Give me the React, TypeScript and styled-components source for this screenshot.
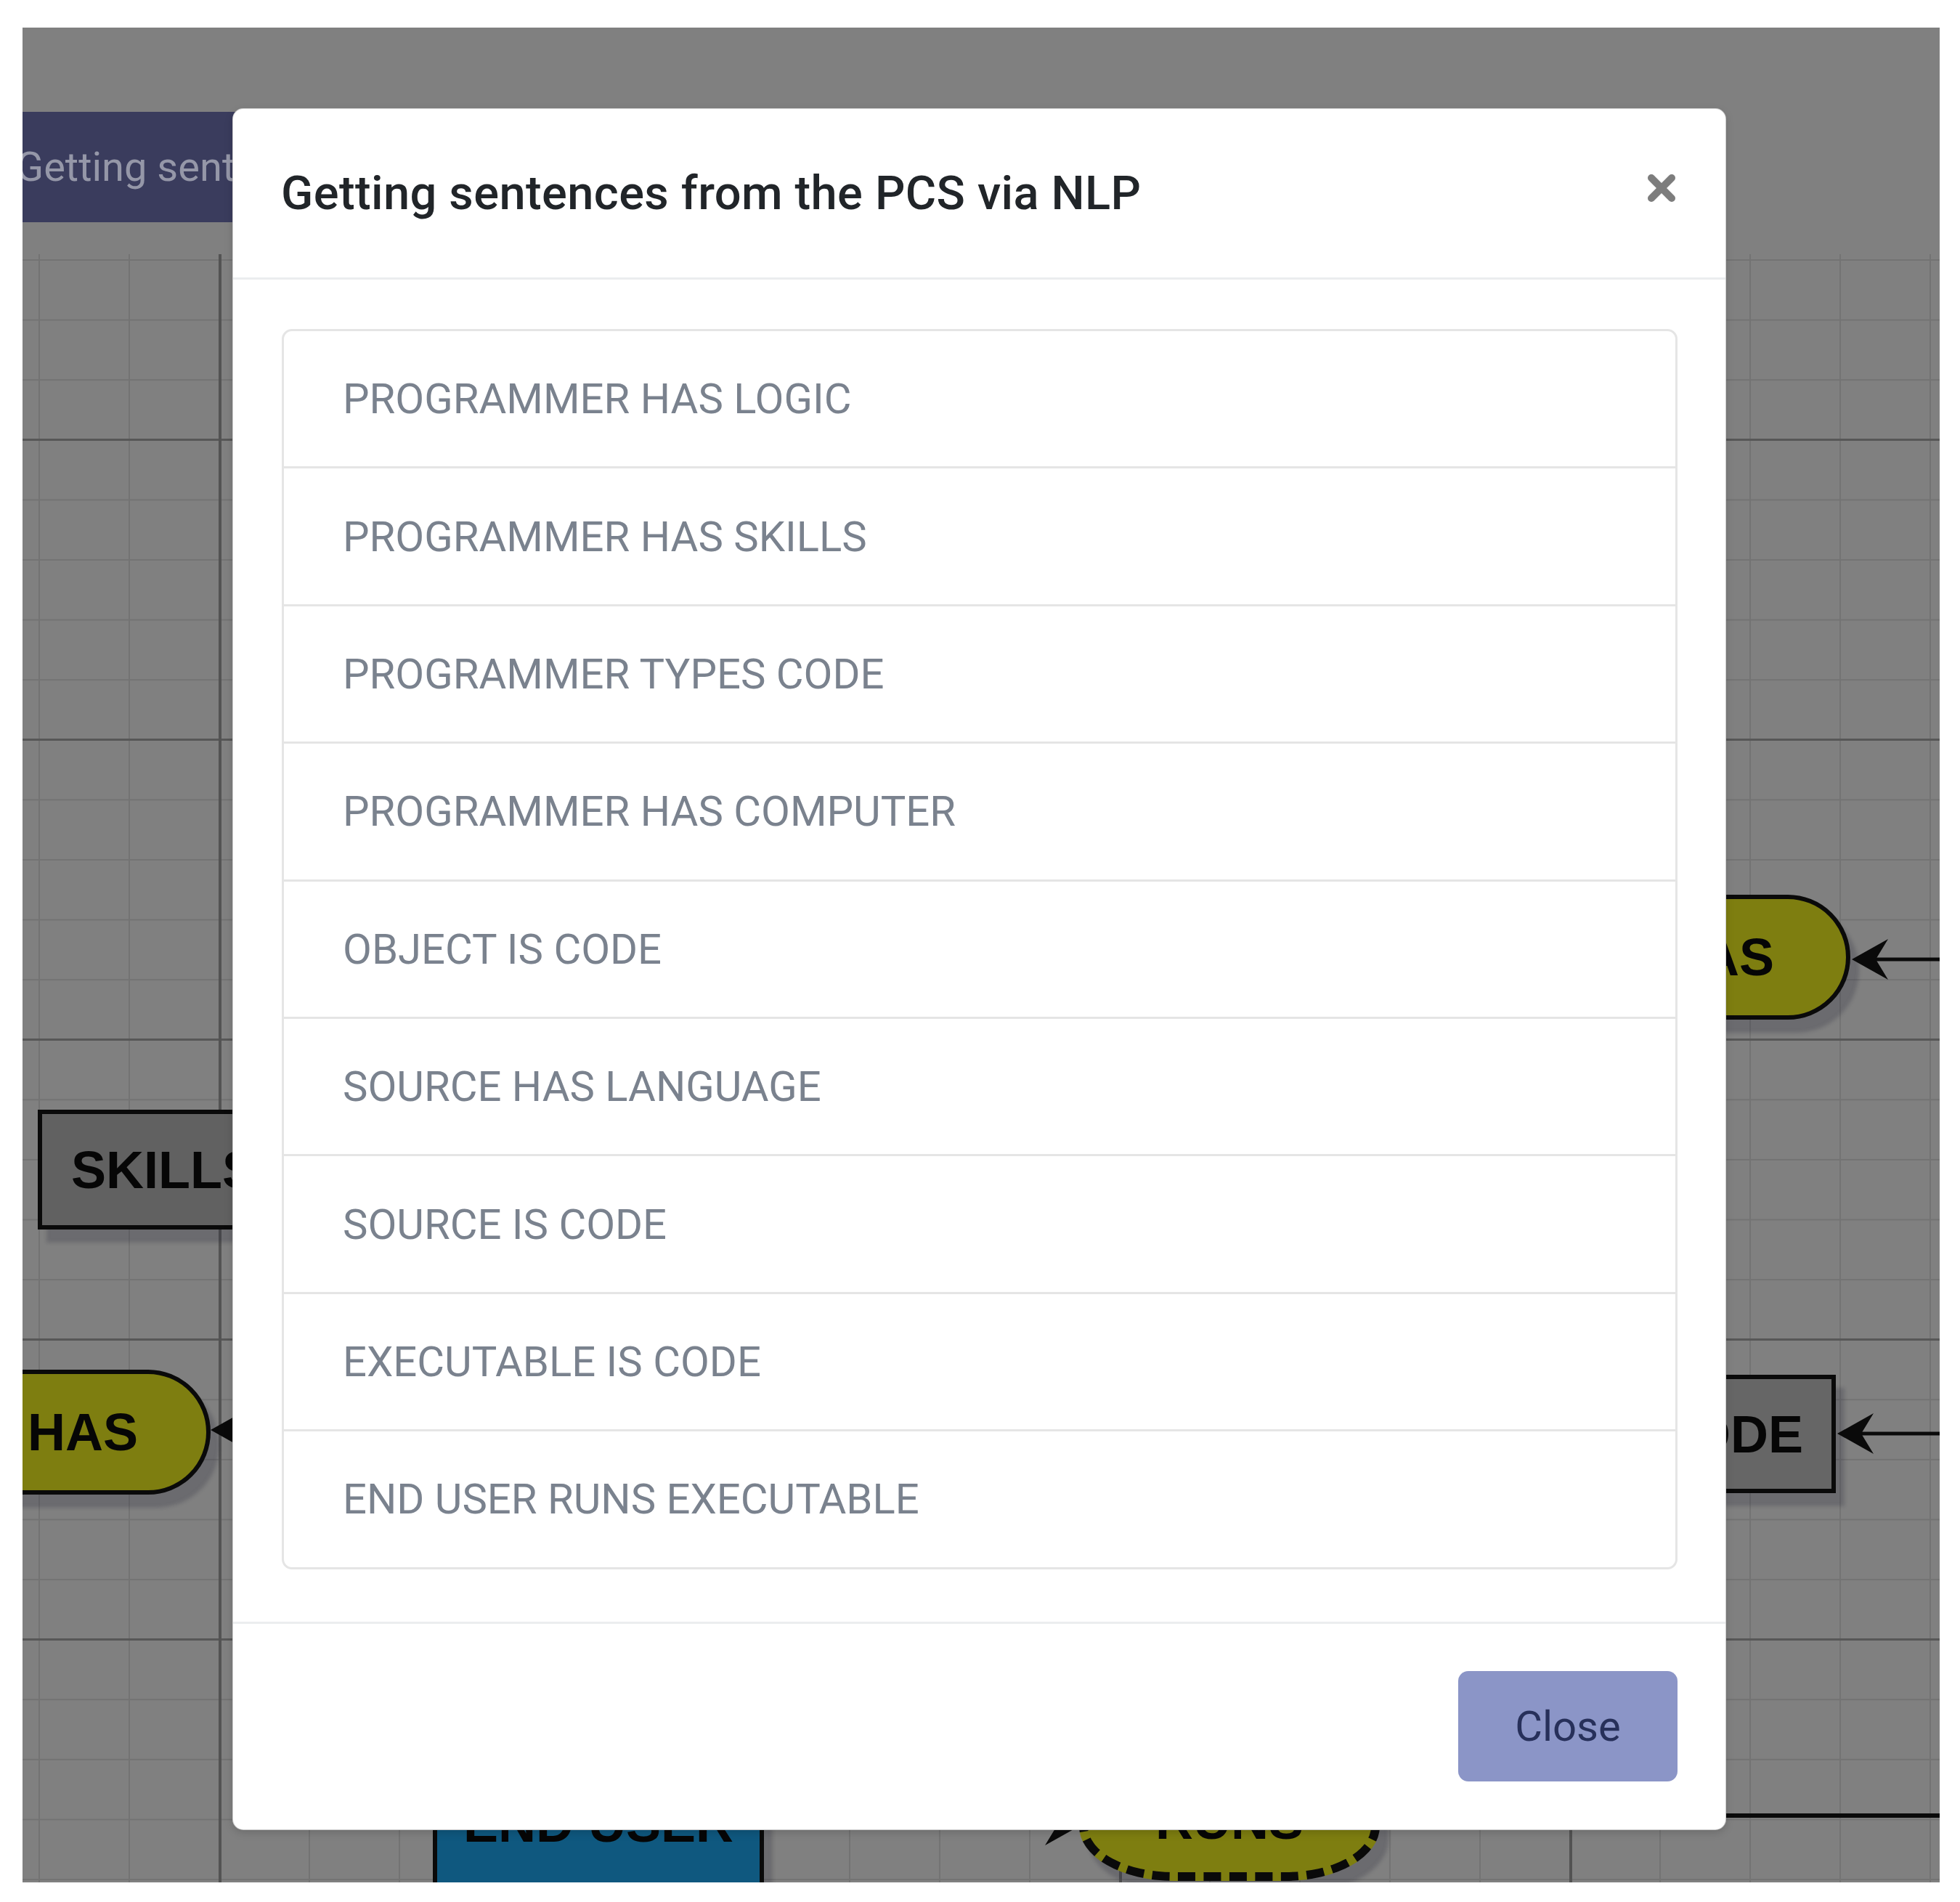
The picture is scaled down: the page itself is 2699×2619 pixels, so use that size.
import React from 'react'
import styled, { createGlobalStyle } from 'styled-components'

const GlobalStyle = createGlobalStyle`
  html, body {
    margin: 0;
    padding: 0;
    background: #ffffff;
  }
  body {
    width: 2699px;
    height: 2619px;
    overflow: hidden;
    font-family: Roboto, 'Liberation Sans', sans-serif;
  }
`

const Page = styled.div`
  padding: 38px 0 0 31px;
`

const Frame = styled.div`
  position: relative;
  width: 2640px;
  height: 2554px;
  overflow: hidden;
  background: #808080;
  display: flex;
  flex-direction: column;
`

const TopBar = styled.div`
  flex: none;
  height: 312px;
  padding-top: 116px;
  box-sizing: border-box;
`

const Tab = styled.div`
  width: 420px;
  height: 152px;
  background: #3a3c5d;
  color: #9597a8;
  font: 400 56px Roboto, sans-serif;
  display: flex;
  align-items: center;
  text-indent: -9px;
  white-space: nowrap;
  overflow: hidden;
`

// diagram canvas, grid of minor cells with a darker line every five
const Canvas = styled.div`
  position: relative;
  flex: 1;
  background-color: #808080;
  background-image:
    linear-gradient(to right, #535353 0 4px, transparent 4px),
    linear-gradient(to bottom, #575757 0 3px, transparent 3px),
    linear-gradient(to right, #737373 0 2px, transparent 2px),
    linear-gradient(to bottom, #737373 0 2px, transparent 2px);
  background-size: 620px 100%, 100% 413px, 124px 100%, 100% 82.6px;
  background-position: 270px 0, 0 254px, 22px 0, 0 7px;
`

interface NodeProps {
  $x: number
  $y: number
  $w: number
  $h: number
  $align?: 'flex-start' | 'center' | 'flex-end'
  $padL?: number
  $padR?: number
}

const Node = styled.div<NodeProps>`
  position: absolute;
  left: ${({ $x }) => $x}px;
  top: ${({ $y }) => $y}px;
  width: ${({ $w }) => $w}px;
  height: ${({ $h }) => $h}px;
  box-sizing: border-box;
  display: flex;
  align-items: center;
  justify-content: ${({ $align }) => $align || 'center'};
  padding-left: ${({ $padL }) => $padL || 0}px;
  padding-right: ${({ $padR }) => $padR || 0}px;
  font: 700 72px 'Liberation Sans', Arial, sans-serif;
  color: #060606;
  white-space: nowrap;
  overflow: hidden;
  box-shadow: 12px 18px 5px rgba(30, 30, 50, 0.22);
`

const ObjectBox = styled(Node)<{ $fill: string }>`
  border: 6px solid #0a0a0a;
  background: ${({ $fill }) => $fill};
`

const ProcessPill = styled(Node)`
  border: 6px solid #0a0a0a;
  border-radius: 86px;
  background: #7e7e10;
`

const EnvProcess = styled(Node)`
  border: 12px dashed #0a0a0a;
  border-radius: 130px / 75px;
  background: #7e7e10;
`

const EdgeLine = styled.div<{ $x: number; $y: number; $w: number }>`
  position: absolute;
  left: ${({ $x }) => $x}px;
  top: ${({ $y }) => $y}px;
  width: ${({ $w }) => $w}px;
  height: 6px;
  background: #0a0a0a;
`

const ArrowSvg = styled.svg<{ $x: number; $y: number }>`
  position: absolute;
  left: ${({ $x }) => $x}px;
  top: ${({ $y }) => $y}px;
  overflow: visible;
`

// tip sits on the node, line runs off to the side
const Arrow = ({ x, y, len, dir }: { x: number; y: number; len: number; dir: 'left' | 'right' }) => {
  const left = dir === 'left' ? x : x - len
  return (
    <ArrowSvg $x={left} $y={y - 30} width={len} height={60} viewBox={`0 0 ${len} 60`}>
      <g transform={dir === 'right' ? `translate(${len} 0) scale(-1 1)` : undefined}>
        <line x1={33} y1={30} x2={len} y2={30} stroke="#0a0a0a" strokeWidth={5} />
        <polygon points="0,30 50,2 33,30 50,58" fill="#0a0a0a" />
      </g>
    </ArrowSvg>
  )
}

const Overlay = styled.div`
  position: absolute;
  inset: 0;
  padding: 111px 0 0 289px;
`

const Modal = styled.div`
  width: 2057px;
  background: #ffffff;
  border: 1px solid rgba(0, 0, 0, 0.2);
  border-radius: 15px;
  box-sizing: border-box;
  box-shadow: 0 4px 12px rgba(0, 0, 0, 0.15);
`

const Header = styled.div`
  height: 235px;
  box-sizing: border-box;
  border-bottom: 3px solid #ebedef;
  display: flex;
  align-items: center;
  justify-content: space-between;
  padding: 0 68px 0 66px;
`

const Title = styled.h5`
  margin: 0;
  font: 500 65px Roboto, sans-serif;
  letter-spacing: 0.4px;
  line-height: 1;
  color: #212529;
`

const CloseX = styled.button`
  width: 40px;
  height: 40px;
  padding: 0;
  margin-bottom: 14px;
  border: none;
  background: none;
  display: flex;
`

const Body = styled.div`
  padding: 68px 66px 72px 67px;
`

const ListGroup = styled.ul`
  list-style: none;
  margin: 0;
  padding: 0;
  border: 3px solid #e5e5e5;
  border-radius: 14px;
  overflow: hidden;
`

const ListItem = styled.li`
  height: 186.4px;
  display: flex;
  align-items: center;
  padding-left: 81px;
  font: 400 58px Roboto, sans-serif;
  color: #7a828e;
  & + & {
    border-top: 3px solid #e5e5e5;
  }
`

const Footer = styled.div`
  height: 286px;
  box-sizing: border-box;
  border-top: 3px solid #ebedef;
  display: flex;
  align-items: center;
  justify-content: flex-end;
  padding-right: 66px;
`

const Button = styled.button`
  width: 302px;
  height: 152px;
  border: none;
  border-radius: 14px;
  background: #8b95c7;
  color: #27305a;
  font: 400 58px Roboto, sans-serif;
`

const sentences = [
  'PROGRAMMER HAS LOGIC',
  'PROGRAMMER HAS SKILLS',
  'PROGRAMMER TYPES CODE',
  'PROGRAMMER HAS COMPUTER',
  'OBJECT IS CODE',
  'SOURCE HAS LANGUAGE',
  'SOURCE IS CODE',
  'EXECUTABLE IS CODE',
  'END USER RUNS EXECUTABLE',
]

export default function App() {
  return (
    <>
      <GlobalStyle />
      <Page>
        <Frame>
          <TopBar>
            <Tab>Getting sentences from the PCS via NLP</Tab>
          </TopBar>
          <Canvas>
            <ObjectBox $x={21} $y={1178} $w={420} $h={165} $fill="#616161" $align="flex-start" $padL={40}>
              SKILLS
            </ObjectBox>
            <ProcessPill $x={-240} $y={1536} $w={499} $h={172} $align="flex-start" $padL={241}>
              HAS
            </ProcessPill>
            <Arrow x={259} y={1619} len={160} dir="left" />

            <ProcessPill $x={2097} $y={882} $w={420} $h={172} $align="flex-end" $padR={99}>
              HAS
            </ProcessPill>
            <Arrow x={2519} y={971} len={121} dir="left" />

            <ObjectBox $x={2097} $y={1543} $w={400} $h={163} $fill="#666666" $align="flex-end" $padR={39}>
              CODE
            </ObjectBox>
            <Arrow x={2499} y={1624} len={141} dir="left" />

            <EdgeLine $x={2200} $y={2147} $w={440} />

            <ObjectBox $x={565} $y={2036} $w={456} $h={250} $fill="#0f587f">
              END USER
            </ObjectBox>
            <Arrow x={1458} y={2163} len={300} dir="right" />
            <EnvProcess $x={1455} $y={2074} $w={414} $h={166}>
              RUNS
            </EnvProcess>
          </Canvas>

          <Overlay>
            <Modal>
              <Header>
                <Title>Getting sentences from the PCS via NLP</Title>
                <CloseX aria-label="Close">
                  <svg width="40" height="40" viewBox="0 0 40 40">
                    <path d="M6 6 L34 34 M34 6 L6 34" stroke="#7d7d7d" strokeWidth="10" strokeLinecap="round" />
                  </svg>
                </CloseX>
              </Header>
              <Body>
                <ListGroup>
                  {sentences.map((s) => (
                    <ListItem key={s}>{s}</ListItem>
                  ))}
                </ListGroup>
              </Body>
              <Footer>
                <Button>Close</Button>
              </Footer>
            </Modal>
          </Overlay>
        </Frame>
      </Page>
    </>
  )
}
